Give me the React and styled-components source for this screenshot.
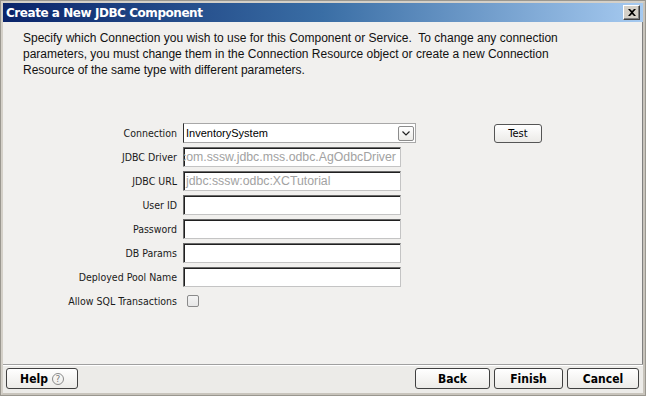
import styled, { createGlobalStyle } from "styled-components";

const GlobalStyle = createGlobalStyle`
  html, body {
    margin: 0;
    padding: 0;
    background: #d4d0c8;
  }
  * {
    box-sizing: border-box;
  }
`;

const fields = [
  { label: "JDBC Driver", value: "com.sssw.jdbc.mss.odbc.AgOdbcDriver", disabled: true, shift: 6 },
  { label: "JDBC URL", value: "jdbc:sssw:odbc:XCTutorial", disabled: true },
  { label: "User ID", value: "" },
  { label: "Password", value: "" },
  { label: "DB Params", value: "" },
  { label: "Deployed Pool Name", value: "" },
];

const App = () => {
  return (
    <>
      <GlobalStyle />
      <Window>
        <TitleBar>
          <Title>Create a New JDBC Component</Title>
          <CloseButton>
            <svg width="8" height="7" viewBox="0 0 8 7">
              <path d="M0 0 L2 0 L4 2 L6 0 L8 0 L5 3.5 L8 7 L6 7 L4 5 L2 7 L0 7 L3 3.5 Z" fill="#000" />
            </svg>
          </CloseButton>
        </TitleBar>

        <Content>
          <Description>
            Specify which Connection you wish to use for this Component or Service.&nbsp; To change any connection
            <br />
            parameters, you must change them in the Connection Resource object or create a new Connection
            <br />
            Resource of the same type with different parameters.
          </Description>

          <Form>
            <Label>Connection</Label>
            <Combo>
              <ComboText>InventorySystem</ComboText>
              <ComboArrow>
                <svg width="8" height="5" viewBox="0 0 8 5">
                  <path d="M0.5 0.5 L4 4 L7.5 0.5" stroke="#222" strokeWidth="1.2" fill="none" />
                </svg>
              </ComboArrow>
            </Combo>
            <TestCell>
              <TestButton>Test</TestButton>
            </TestCell>

            {fields.map((f) => (
              <Row key={f.label}>
                <Label>{f.label}</Label>
                <Field $disabled={f.disabled}>
                  <FieldText $disabled={f.disabled} $shift={f.shift}>{f.value}</FieldText>
                </Field>
              </Row>
            ))}

            <Label>Allow SQL Transactions</Label>
            <CheckCell>
              <Checkbox />
            </CheckCell>
          </Form>
        </Content>

        <Footer>
          <FooterButton>
            Help
            <HelpIcon>?</HelpIcon>
          </FooterButton>
          <Spacer />
          <FooterButton $w={75}>Back</FooterButton>
          <FooterButton $w={69}>Finish</FooterButton>
          <FooterButton $w={72}>Cancel</FooterButton>
        </Footer>
      </Window>
    </>
  );
};

export default App;

const Window = styled.div`
  width: 646px;
  height: 396px;
  display: flex;
  flex-direction: column;
  background: #f1f0ee;
  border: 3px solid #d4d0c8;
  border-right-color: #c8c4bc;
  border-bottom-color: #c8c4bc;
  box-shadow: inset -1px -1px 0 #808080;
  outline: 1px solid #9a978f;
  outline-offset: -1px;
`;

const TitleBar = styled.div`
  height: 19px;
  flex-shrink: 0;
  display: flex;
  align-items: center;
  justify-content: space-between;
  padding: 0 3px 0 3px;
  background: linear-gradient(to right, #0a246a 0%, #3a6ea5 50%, #a6caf0 100%);
`;

const Title = styled.span`
  font-family: "DejaVu Sans", sans-serif;
  font-weight: bold;
  font-size: 12px;
  letter-spacing: -0.45px;
  color: #ffffff;
`;

const CloseButton = styled.div`
  width: 17px;
  height: 15px;
  display: flex;
  align-items: center;
  justify-content: center;
  background: #d4d0c8;
  border: 1px solid;
  border-color: #ffffff #404040 #404040 #ffffff;
  box-shadow: inset -1px -1px 0 #808080;
`;

const Content = styled.div`
  flex: 1;
  display: flex;
  flex-direction: column;
  padding: 8px 0 0 20px;
`;

const Description = styled.p`
  margin: 0;
  font-family: "Liberation Sans", Arial, sans-serif;
  font-size: 12px;
  line-height: 16px;
  color: #111;
`;

const Form = styled.div`
  display: grid;
  grid-template-columns: 154px 233px auto;
  grid-auto-rows: 20px;
  column-gap: 6px;
  row-gap: 4px;
  margin-top: 45px;
  align-items: center;
`;

const Row = styled.div`
  display: contents;
`;

const Label = styled.span`
  grid-column: 1;
  justify-self: end;
  font-family: "DejaVu Sans Condensed", "DejaVu Sans", sans-serif;
  font-size: 10.5px;
  color: #1a1a1a;
  white-space: nowrap;
`;

const Combo = styled.div`
  grid-column: 2;
  height: 20px;
  display: flex;
  align-items: center;
  justify-content: space-between;
  background: #ffffff;
  border: 1px solid #a8a8a8;
  border-left-color: #303030;
  padding: 0 1px 0 2px;
`;

const ComboText = styled.span`
  font-family: "Liberation Sans", Arial, sans-serif;
  font-size: 11px;
  color: #000;
`;

const ComboArrow = styled.div`
  width: 16px;
  height: 15px;
  display: flex;
  align-items: center;
  justify-content: center;
  border: 1px solid #8c8c8c;
  border-radius: 2px;
  background: linear-gradient(#ffffff, #ecebe8);
`;

const TestCell = styled.div`
  grid-column: 3;
  padding-left: 72px;
`;

const TestButton = styled.div`
  width: 48px;
  height: 19px;
  display: flex;
  align-items: center;
  justify-content: center;
  border: 1px solid #555;
  border-radius: 3px;
  background: linear-gradient(#ffffff, #ebeae7);
  font-family: "DejaVu Sans Condensed", "DejaVu Sans", sans-serif;
  font-size: 11px;
  color: #000;
`;

const Field = styled.div`
  grid-column: 2;
  width: 218px;
  height: 20px;
  display: flex;
  align-items: center;
  overflow: hidden;
  background: #ffffff;
  border: 1px solid;
  border-color: #6a6a6a #c4c4c4 #c4c4c4 #6a6a6a;
  box-shadow: inset 1px 1px 0 #202020;
  padding-left: 2px;
  color: ${(p) => (p.$disabled ? "#a2a2a2" : "#000")};
`;

const FieldText = styled.span`
  font-family: "Liberation Sans", Arial, sans-serif;
  font-size: ${(p) => (p.$disabled ? 12.3 : 11)}px;
  white-space: nowrap;
  margin-left: ${(p) => (p.$shift ? -p.$shift : 0)}px;
`;

const CheckCell = styled.div`
  grid-column: 2 / span 2;
  padding-left: 4px;
  display: flex;
  align-items: center;
`;

const Checkbox = styled.div`
  width: 12px;
  height: 12px;
  border: 1px solid #8a8a8a;
  border-radius: 2px;
  background: linear-gradient(#f4f4f4, #e6e6e6);
`;

const Footer = styled.div`
  flex-shrink: 0;
  display: flex;
  gap: 4px;
  align-items: center;
  padding: 3px 4px 4px 3px;
  border-top: 1px solid #a0a0a0;
  box-shadow: inset 0 1px 0 #ffffff;
  background: #ecebe8;
`;

const Spacer = styled.div`
  flex: 1;
`;

const FooterButton = styled.div`
  width: ${(p) => (p.$w ? p.$w : 72)}px;
  height: 21px;
  display: flex;
  align-items: center;
  justify-content: center;
  gap: 4px;
  border: 1px solid #404040;
  border-radius: 3px;
  background: linear-gradient(#ffffff, #ecebe8);
  font-family: "DejaVu Sans Condensed", "DejaVu Sans", sans-serif;
  font-weight: bold;
  font-size: 12px;
  color: #000;
`;

const HelpIcon = styled.span`
  width: 12px;
  height: 12px;
  display: flex;
  align-items: center;
  justify-content: center;
  border: 1px solid #8a8a8a;
  border-radius: 50%;
  font-family: "DejaVu Sans", sans-serif;
  font-weight: normal;
  font-size: 9px;
  color: #7a7a7a;
`;
